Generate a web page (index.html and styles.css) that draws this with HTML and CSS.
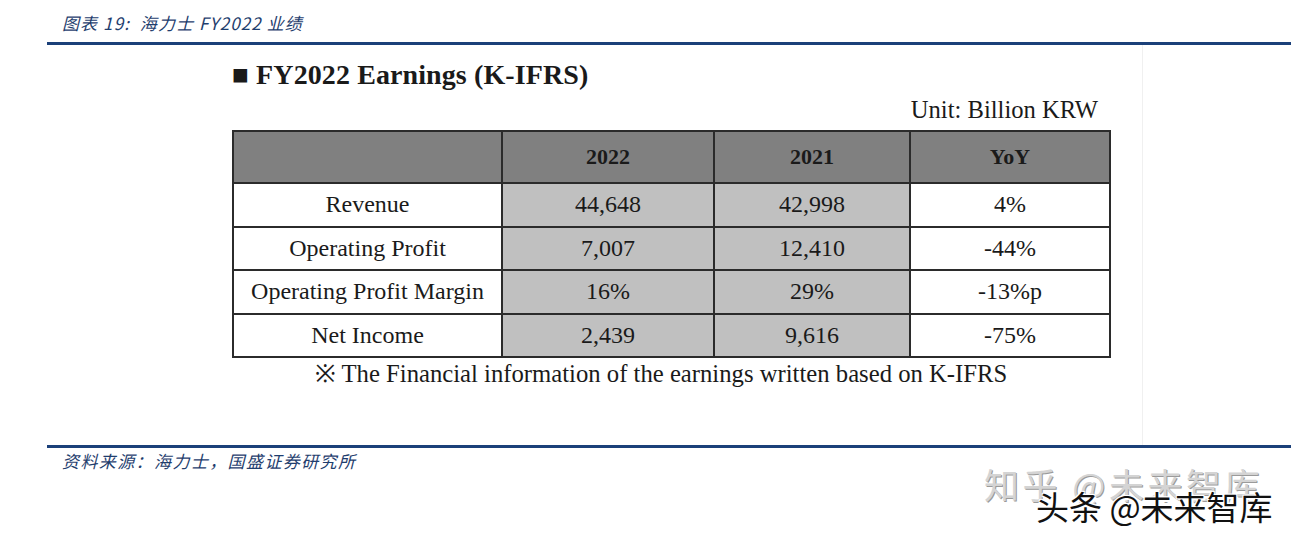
FILE: index.html
```html
<!DOCTYPE html>
<html lang="zh">
<head>
<meta charset="utf-8">
<title>海力士 FY2022 业绩</title>
<link rel="stylesheet" href="styles.css">
</head>
<body>
<div class="page">
  <div class="caption">图表 19:&nbsp; 海力士 FY2022 业绩</div>
  <div class="rule"></div>
  <div class="figure">
    <div class="figure-inner">
      <h1 class="heading">■ FY2022 Earnings (K-IFRS)</h1>
      <div class="unit">Unit: Billion KRW</div>
      <table class="earnings">
        <thead>
          <tr><th class="c-label"></th><th class="c-y">2022</th><th class="c-y2">2021</th><th class="c-yoy">YoY</th></tr>
        </thead>
        <tbody>
          <tr><td>Revenue</td><td class="shade">44,648</td><td class="shade">42,998</td><td>4%</td></tr>
          <tr><td>Operating Profit</td><td class="shade">7,007</td><td class="shade">12,410</td><td>-44%</td></tr>
          <tr><td>Operating Profit Margin</td><td class="shade">16%</td><td class="shade">29%</td><td>-13%p</td></tr>
          <tr><td>Net Income</td><td class="shade">2,439</td><td class="shade">9,616</td><td>-75%</td></tr>
        </tbody>
      </table>
      <div class="note">※ The Financial information of the earnings written based on K-IFRS</div>
    </div>
  </div>
  <div class="rule rule-bottom"></div>
  <div class="source">资料来源：海力士，国盛证券研究所</div>
</div>
<div class="wm wm-zhihu">知乎 @未来智库</div>
<div class="wm wm-toutiao">头条 @未来智库</div>
</body>
</html>
```

FILE: styles.css
```css
html, body {
  margin: 0;
  padding: 0;
  background: #ffffff;
}
body {
  width: 1291px;
  height: 539px;
  overflow: hidden;
  position: relative;
}
.page {
  padding-top: 12px;
}
.caption {
  margin-left: 62px;
  font-family: "Noto Sans CJK SC", "DejaVu Sans", sans-serif;
  font-style: italic;
  font-size: 17px;
  line-height: 22px;
  color: #1f3e6e;
  letter-spacing: 1.1px;
}
.rule {
  margin-left: 47px;
  height: 3px;
  background: #1b4079;
  margin-top: 8px;
}
.figure {
  height: 400px;
  display: flex;
}
.figure-inner {
  margin-left: 200px;
  width: 943px;
  border-right: 1px solid #f0f0f0;
  padding-left: 32px;
  box-sizing: border-box;
  font-family: "Liberation Serif", "Times New Roman", serif;
  color: #1a1a1a;
}
.heading {
  margin: 15px 0 0 0;
  font-size: 28px;
  font-weight: bold;
  line-height: 30px;
  letter-spacing: 0.1px;
}
.unit {
  width: 866px;
  text-align: right;
  font-size: 24.6px;
  line-height: 28px;
  margin-top: 6px;
}
.earnings {
  margin-top: 6px;
  border-collapse: collapse;
  width: 869px;
  font-size: 24px;
  table-layout: fixed;
}
.earnings th, .earnings td {
  border: 2px solid #2b2b2b;
  text-align: center;
  padding: 0;
}
.earnings th {
  background: #808080;
  height: 50px;
  font-weight: bold;
  font-size: 22px;
}
.earnings td {
  height: 41.5px;
  background: #ffffff;
}
.earnings td.shade {
  background: #c0c0c0;
}
.c-label { width: 267px; }
.c-y { width: 210px; }
.c-y2 { width: 194px; }
.c-yoy { width: 198px; }
.note {
  width: 858px;
  text-align: center;
  font-size: 24.7px;
  line-height: 30px;
  margin-top: 1px;
}
.rule-bottom {
  margin-top: 0;
}
.source {
  margin-left: 62px;
  margin-top: 3px;
  font-family: "Noto Sans CJK SC", "DejaVu Sans", sans-serif;
  font-style: italic;
  font-size: 17px;
  line-height: 20px;
  letter-spacing: 1.4px;
  color: #1f3e6e;
}
.wm {
  position: absolute;
  font-family: "Noto Sans CJK SC", "DejaVu Sans", sans-serif;
  line-height: 40px;
  white-space: nowrap;
}
.wm-zhihu {
  left: 984px;
  top: 464px;
  font-size: 35px;
  color: #d4d4d4;
  text-shadow: 1px 1px 0 #9a9a9a;
  letter-spacing: 3.5px;
}
.wm-toutiao {
  left: 1036px;
  top: 486px;
  color: #111111;
  font-size: 33px;
  text-shadow: -1px -1px 0 #fff, 1px -1px 0 #fff, -1px 1px 0 #fff, 1px 1px 0 #fff, 2px 2px 0 #fff;
}
```
